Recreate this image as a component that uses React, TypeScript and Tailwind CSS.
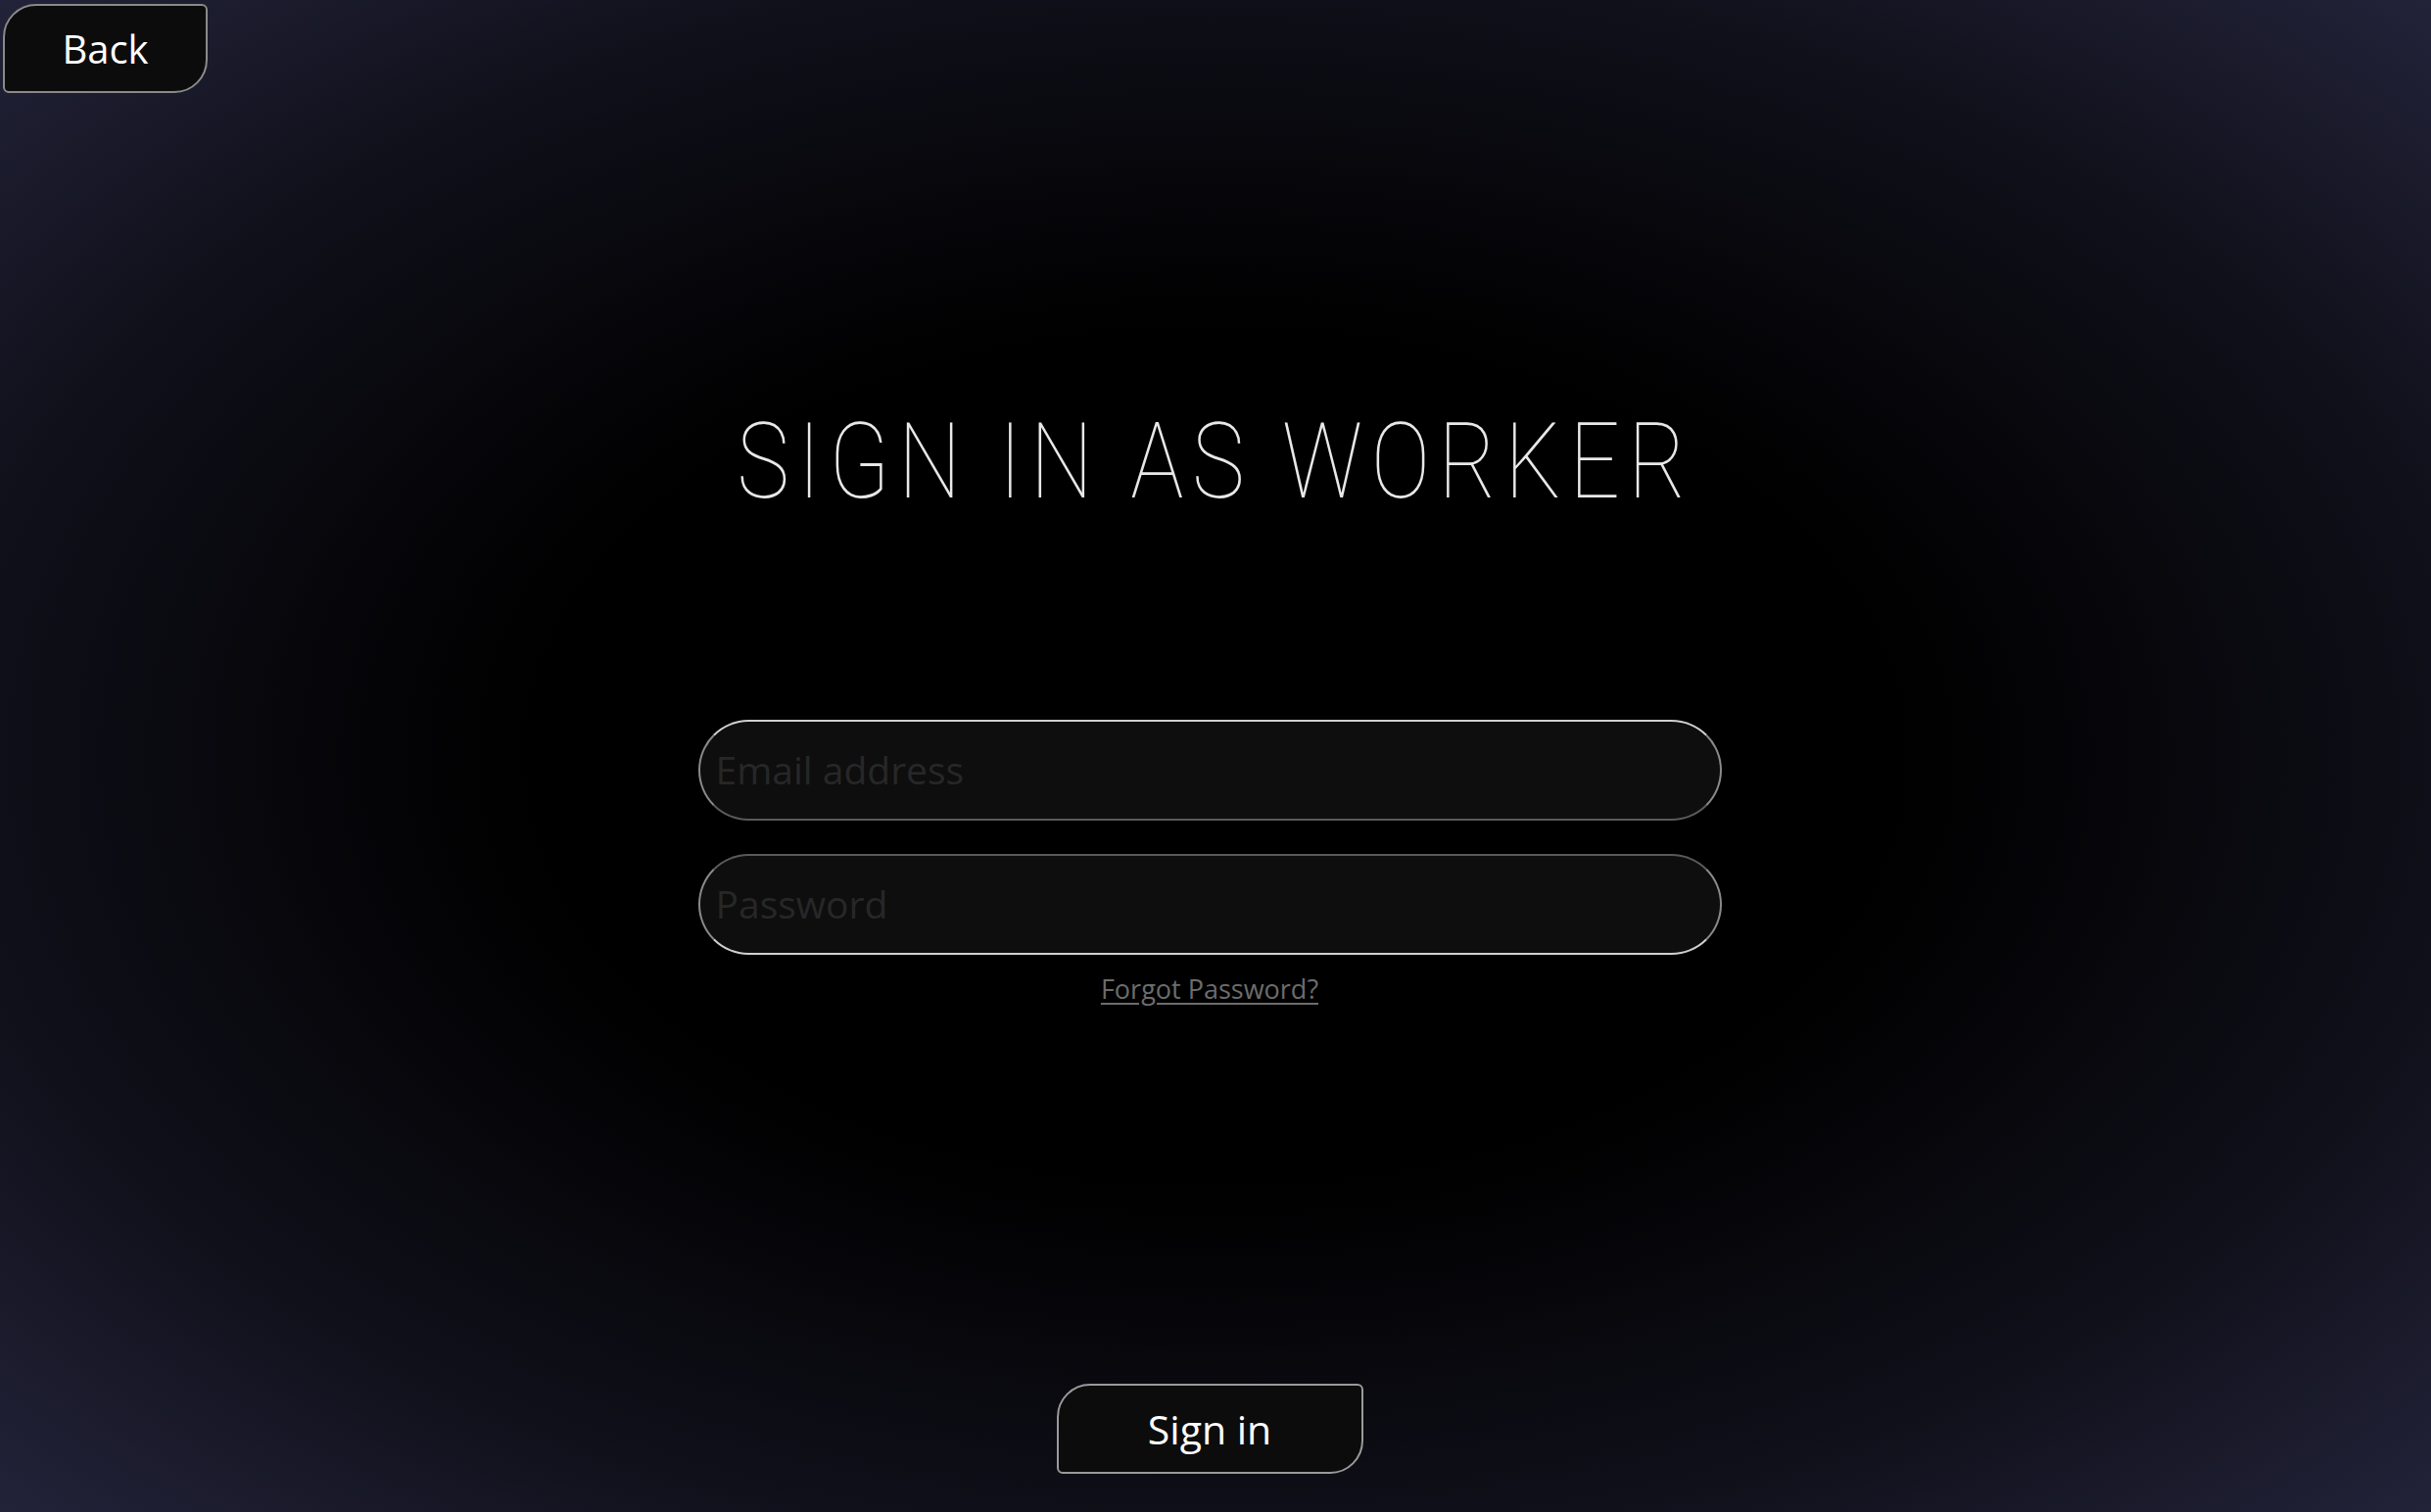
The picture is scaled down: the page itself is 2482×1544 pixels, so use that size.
import React from "react";

export default function App() {
  return (
    <div className="relative w-full h-[1544px] overflow-hidden bg-[radial-gradient(ellipse_at_center,#000000_0%,#000000_40%,#0f0f19_72%,#222339_100%)] font-['Open_Sans','Noto_Sans',sans-serif]">
      <div className="flex flex-col items-start pl-[3px] pt-[4px]">
        <button className="w-[209px] h-[91px] bg-[#0c0c0c] border-2 border-[#8a8a8a] rounded-tl-[34px] rounded-br-[34px] rounded-tr-[6px] rounded-bl-[6px] text-white text-[40px] leading-none flex items-center justify-center">
          Back
        </button>
      </div>
      <div className="flex flex-col items-center pr-[12px]">
        <h1 className="mt-[322px] ml-[12px] text-[#e8e8ea] text-[108px] leading-none font-thin tracking-[10px] font-['Roboto','Open_Sans',sans-serif] scale-x-[0.84]">
          SIGN IN AS WORKER
        </h1>
        <div className="mt-[210px] flex flex-col gap-[34px] w-[1045px]">
          <div className="h-[103px] rounded-full bg-[#0e0e0e] border-2 border-t-[#d0d0d0] border-b-[#5a5a5a] border-x-[#8a8a8a] flex items-center pl-[16px]">
            <input
              placeholder="Email address"
              className="w-full bg-transparent outline-none text-[39px] text-white placeholder:text-[#272727]"
            />
          </div>
          <div className="h-[103px] rounded-full bg-[#0e0e0e] border-2 border-t-[#5a5a5a] border-b-[#d0d0d0] border-x-[#8a8a8a] flex items-center pl-[16px]">
            <input
              type="password"
              placeholder="Password"
              className="w-full bg-transparent outline-none text-[39px] text-white placeholder:text-[#272727]"
            />
          </div>
        </div>
        <a className="mt-[21px] text-[27px] text-[#6c6c6c] underline underline-offset-4 leading-none cursor-pointer">
          Forgot Password?
        </a>
        <button className="mt-[390px] w-[313px] h-[92px] bg-[#0c0c0c] border-2 border-[#9a9a9a] rounded-tl-[34px] rounded-br-[34px] rounded-tr-[6px] rounded-bl-[6px] text-white text-[41px] leading-none flex items-center justify-center">
          Sign in
        </button>
      </div>
    </div>
  );
}
